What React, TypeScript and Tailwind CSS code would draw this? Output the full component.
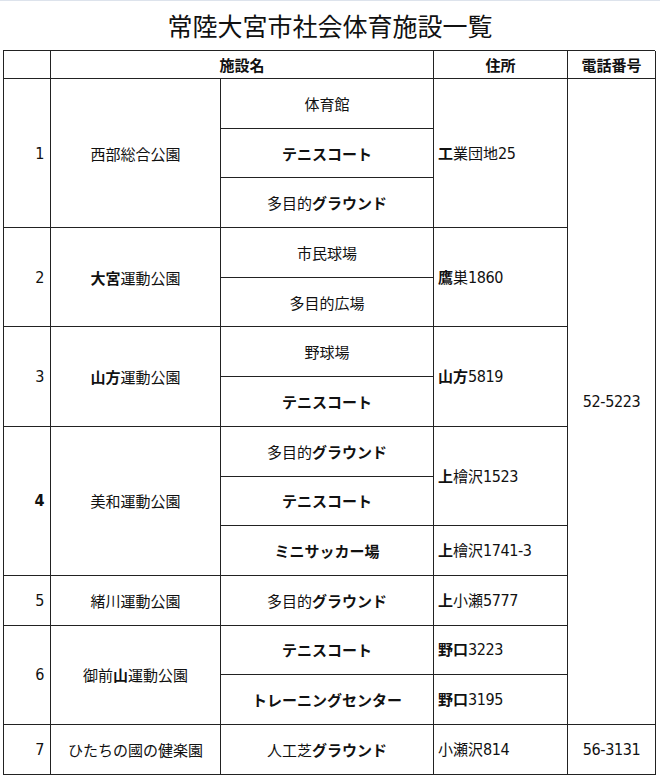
import React from 'react';

type Part = string | { b: string };

const jp = 'font-["Noto_Sans_CJK_JP","Noto_Sans",sans-serif]';
const narrow = 'font-["Liberation_Sans_Narrow","DejaVu_Sans_Condensed","Liberation_Sans",sans-serif] [font-stretch:condensed]';

// render text: objects are bold, digit runs get the narrow font
function Txt({ parts }: { parts: Part[] }) {
  return (
    <span>
      {parts.map((p, i) => {
        const bold = typeof p !== 'string';
        const s = typeof p === 'string' ? p : p.b;
        return s.split(/(\d[\d-]*)/).map((chunk, j) =>
          chunk === '' ? null : /^\d/.test(chunk) ? (
            <span key={`${i}-${j}`} className={`${narrow} text-[16px] tracking-[-0.4px] ${bold ? 'font-bold' : ''}`}>
              {chunk}
            </span>
          ) : (
            <span key={`${i}-${j}`} className={bold ? 'font-bold' : 'font-normal'}>
              {chunk}
            </span>
          )
        );
      })}
    </span>
  );
}

const cell = 'border-r border-b border-[#222] flex items-center';

export default function App() {
  return (
    <div className={`w-[660px] h-[778px] bg-white text-[#111] border-t border-[#dde3ec] ${jp}`}>
      <div className="h-[49px] flex items-center justify-center">
        <h1 className="text-[25px] leading-none font-normal">常陸大宮市社会体育施設一覧</h1>
      </div>

      <div className="ml-[3px] w-[652px] grid grid-cols-[47px_170px_213px_134px_88px] grid-rows-[28px_repeat(14,49.7px)] border-l border-t border-[#222] text-[15px] leading-none">
        {/* header */}
        <div className={`${cell} col-start-1 row-start-1`} />
        <div className={`${cell} col-start-2 col-span-2 row-start-1 justify-center font-bold`}>施設名</div>
        <div className={`${cell} col-start-4 row-start-1 justify-center font-bold`}>住所</div>
        <div className={`${cell} col-start-5 row-start-1 justify-center font-bold`}>電話番号</div>

        {/* numbers */}
        <div className={`${cell} col-start-1 row-start-2 row-span-3 justify-end pr-[6px]`}><Txt parts={['1']} /></div>
        <div className={`${cell} col-start-1 row-start-5 row-span-2 justify-end pr-[6px]`}><Txt parts={['2']} /></div>
        <div className={`${cell} col-start-1 row-start-7 row-span-2 justify-end pr-[6px]`}><Txt parts={['3']} /></div>
        <div className={`${cell} col-start-1 row-start-9 row-span-3 justify-end pr-[6px]`}><Txt parts={[{ b: '4' }]} /></div>
        <div className={`${cell} col-start-1 row-start-12 justify-end pr-[6px]`}><Txt parts={['5']} /></div>
        <div className={`${cell} col-start-1 row-start-13 row-span-2 justify-end pr-[6px]`}><Txt parts={['6']} /></div>
        <div className={`${cell} col-start-1 row-start-15 justify-end pr-[6px]`}><Txt parts={['7']} /></div>

        {/* parks */}
        <div className={`${cell} col-start-2 row-start-2 row-span-3 justify-center`}>西部総合公園</div>
        <div className={`${cell} col-start-2 row-start-5 row-span-2 justify-center`}><Txt parts={[{ b: '大宮' }, '運動公園']} /></div>
        <div className={`${cell} col-start-2 row-start-7 row-span-2 justify-center`}><Txt parts={[{ b: '山方' }, '運動公園']} /></div>
        <div className={`${cell} col-start-2 row-start-9 row-span-3 justify-center`}>美和運動公園</div>
        <div className={`${cell} col-start-2 row-start-12 justify-center`}>緒川運動公園</div>
        <div className={`${cell} col-start-2 row-start-13 row-span-2 justify-center`}><Txt parts={['御前', { b: '山' }, '運動公園']} /></div>
        <div className={`${cell} col-start-2 row-start-15 justify-center`}>ひたちの國の健楽園</div>

        {/* facilities */}
        <div className={`${cell} col-start-3 row-start-2 justify-center`}>体育館</div>
        <div className={`${cell} col-start-3 row-start-3 justify-center font-bold`}>テニスコート</div>
        <div className={`${cell} col-start-3 row-start-4 justify-center`}><Txt parts={['多目的', { b: 'グラウンド' }]} /></div>
        <div className={`${cell} col-start-3 row-start-5 justify-center`}>市民球場</div>
        <div className={`${cell} col-start-3 row-start-6 justify-center`}>多目的広場</div>
        <div className={`${cell} col-start-3 row-start-7 justify-center`}>野球場</div>
        <div className={`${cell} col-start-3 row-start-8 justify-center font-bold`}>テニスコート</div>
        <div className={`${cell} col-start-3 row-start-9 justify-center`}><Txt parts={['多目的', { b: 'グラウンド' }]} /></div>
        <div className={`${cell} col-start-3 row-start-10 justify-center font-bold`}>テニスコート</div>
        <div className={`${cell} col-start-3 row-start-11 justify-center font-bold`}>ミニサッカー場</div>
        <div className={`${cell} col-start-3 row-start-12 justify-center`}><Txt parts={['多目的', { b: 'グラウンド' }]} /></div>
        <div className={`${cell} col-start-3 row-start-13 justify-center font-bold`}>テニスコート</div>
        <div className={`${cell} col-start-3 row-start-14 justify-center font-bold`}>トレーニングセンター</div>
        <div className={`${cell} col-start-3 row-start-15 justify-center`}><Txt parts={['人工芝', { b: 'グラウンド' }]} /></div>

        {/* addresses */}
        <div className={`${cell} col-start-4 row-start-2 row-span-3 pl-[4px]`}><Txt parts={[{ b: '工' }, '業団地25']} /></div>
        <div className={`${cell} col-start-4 row-start-5 row-span-2 pl-[4px]`}><Txt parts={[{ b: '鷹' }, '巣1860']} /></div>
        <div className={`${cell} col-start-4 row-start-7 row-span-2 pl-[4px]`}><Txt parts={[{ b: '山方' }, '5819']} /></div>
        <div className={`${cell} col-start-4 row-start-9 row-span-2 pl-[4px]`}><Txt parts={[{ b: '上' }, '檜沢1523']} /></div>
        <div className={`${cell} col-start-4 row-start-11 pl-[4px]`}><Txt parts={[{ b: '上' }, '檜沢1741-3']} /></div>
        <div className={`${cell} col-start-4 row-start-12 pl-[4px]`}><Txt parts={[{ b: '上' }, '小瀬5777']} /></div>
        <div className={`${cell} col-start-4 row-start-13 pl-[4px]`}><Txt parts={[{ b: '野口' }, '3223']} /></div>
        <div className={`${cell} col-start-4 row-start-14 pl-[4px]`}><Txt parts={[{ b: '野口' }, '3195']} /></div>
        <div className={`${cell} col-start-4 row-start-15 pl-[4px]`}><Txt parts={['小瀬沢814']} /></div>

        {/* phones */}
        <div className={`${cell} col-start-5 row-start-2 row-span-13 justify-center`}><Txt parts={['52-5223']} /></div>
        <div className={`${cell} col-start-5 row-start-15 justify-center`}><Txt parts={['56-3131']} /></div>
      </div>
    </div>
  );
}
